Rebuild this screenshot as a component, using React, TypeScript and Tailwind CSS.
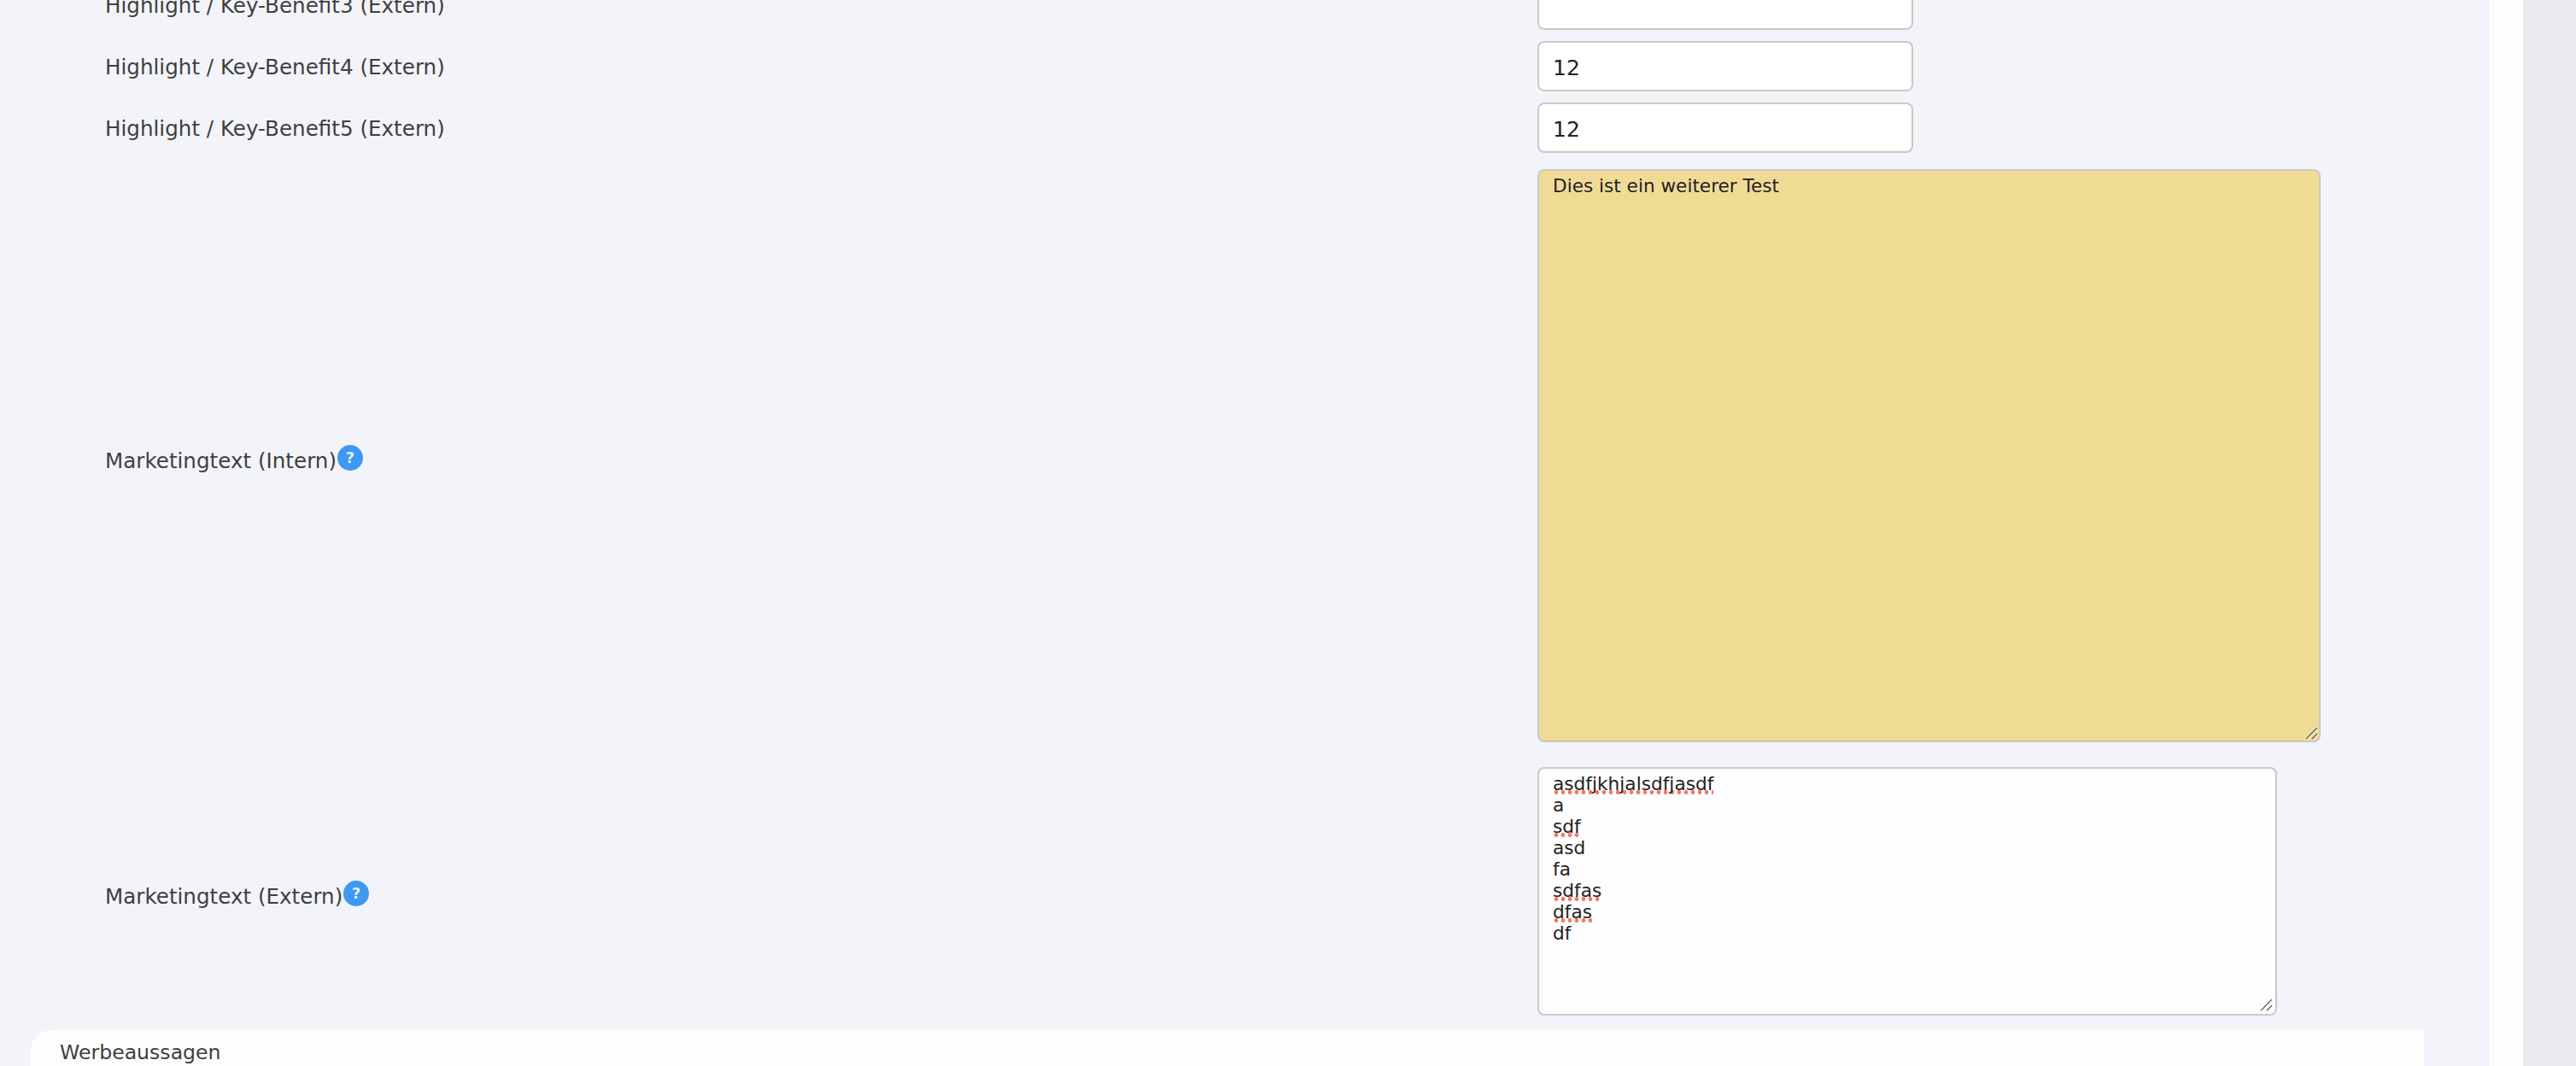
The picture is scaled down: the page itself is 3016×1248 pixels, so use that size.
import React from "react";

const font = "[font-family:'DejaVu_Sans',sans-serif]";

const HelpIcon = () => (
  <span className="-mt-[1px] ml-[1px] inline-flex h-[30px] w-[30px] shrink-0 items-center justify-center rounded-full bg-[#3f98f2] text-[18px] font-bold text-[#e4f0fc] blur-[0.4px]">
    ?
  </span>
);

const Misspelled = ({ children }: { children: React.ReactNode }) => (
  <span className="bg-[radial-gradient(circle,#f47a66_2.2px,transparent_2.7px)] bg-[length:8px_5px] bg-[position:left_0_top_20px] bg-repeat-x">
    {children}
  </span>
);

const ResizeGrip = () => (
  <svg
    viewBox="0 0 14 14"
    className="absolute right-[3px] bottom-[3px] h-[14px] w-[14px]"
    fill="none"
  >
    <path d="M1 14 14 1M8 14l6-6" stroke="#ffffff" strokeOpacity="0.6" strokeWidth="1.2" />
    <path d="M0 13 13 0M7 13l6-6" stroke="#555555" strokeWidth="1.2" />
  </svg>
);

const InputRow = ({ label, value }: { label: string; value: string }) => (
  <div className="flex items-center">
    <label className="w-[1677px] pt-[4px] text-[24.6px] text-[#3f3f3f]">{label}</label>
    <input
      readOnly
      value={value}
      className="h-[59px] w-[440px] rounded-[8px] border-2 border-[#cbc8c8] bg-white px-[16px] pt-[3px] text-[25px] text-[#222222] outline-none"
    />
  </div>
);

export default function App() {
  return (
    <div className={`flex h-screen overflow-hidden text-[24.6px] ${font}`}>
      <main className="w-[2914px] bg-[#f3f4f9]">
        <div className="-mt-[24px] flex flex-col gap-[13px] pl-[123px]">
          <InputRow label="Highlight / Key-Benefit3 (Extern)" value="" />
          <InputRow label="Highlight / Key-Benefit4 (Extern)" value="12" />
          <InputRow label="Highlight / Key-Benefit5 (Extern)" value="12" />
        </div>

        <div className="mt-[19px] flex items-center pl-[123px]">
          <div className="flex w-[1677px] items-center pt-[6px] text-[#3f3f3f]">
            <span className="mt-[8px]">Marketingtext (Intern)</span>
            <HelpIcon />
          </div>
          <div className="relative">
            <textarea
              readOnly
              defaultValue="Dies ist ein weiterer Test"
              className="block h-[671px] w-[917px] resize-none rounded-[8px] border-2 border-[#cbc8c8] bg-[#f0db95] px-[16px] py-[5px] text-[21.6px] leading-[25px] text-[#222222] outline-none"
            />
            <ResizeGrip />
          </div>
        </div>

        <div className="mt-[29px] flex items-center pl-[123px]">
          <div className="flex w-[1677px] items-center pt-[6px] text-[#3f3f3f]">
            <span className="mt-[8px]">Marketingtext (Extern)</span>
            <HelpIcon />
          </div>
          <div className="relative h-[291px] w-[866px] rounded-[8px] border-2 border-[#cbc8c8] bg-[#fdfdfd] px-[16px] py-[5px] text-[21.7px] leading-[25px] text-[#222222]">
            <div><Misspelled>asdfjkhjalsdfjasdf</Misspelled></div>
            <div>a</div>
            <div><Misspelled>sdf</Misspelled></div>
            <div>asd</div>
            <div>fa</div>
            <div><Misspelled>sdfas</Misspelled></div>
            <div><Misspelled>dfas</Misspelled></div>
            <div>df</div>
            <ResizeGrip />
          </div>
        </div>

        <div className="mt-[17px] ml-[36px] mr-[76px] h-[80px] rounded-l-[24px] bg-[#fdfdfd] px-[34px] pt-[9px] text-[23.6px] text-[#3f3f3f]">
          Werbeaussagen
        </div>
      </main>
      <div className="w-[40px] bg-[#fdfdfd]" />
      <div className="flex-1 bg-[#e9eaef]" />
    </div>
  );
}
